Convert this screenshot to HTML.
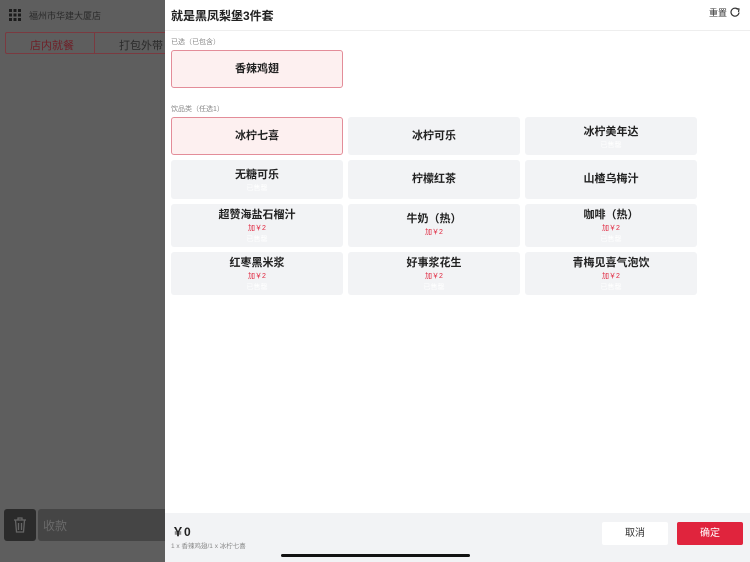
<!DOCTYPE html>
<html><head><meta charset="utf-8"><style>
*{margin:0;padding:0;box-sizing:border-box}
body{width:750px;height:562px;overflow:hidden;position:relative;font-family:"Liberation Sans","Noto Sans CJK SC",sans-serif;background:#fff}
.left{position:absolute;left:0;top:0;width:165px;height:562px;background:#5e5e5e}
.right{position:absolute;left:165px;top:0;width:585px;height:562px;background:#fff}
.abs{position:absolute}
.btn{position:absolute;width:172px;background:#f2f3f5;border-radius:3px;text-align:center;font-size:11px;color:#222;font-weight:600;line-height:15px}
.sel{background:#fdf0f0;border:1px solid #e38d99}
.red{color:#e0243d;font-size:7px;font-weight:normal;line-height:11px}
.w{color:#fff;font-size:7px;font-weight:normal;line-height:11px}
</style></head><body>
<div class="left">
 <svg class="abs" style="left:9px;top:9px" width="12" height="12"><g fill="#1c1c1c"><rect x="0" y="0" width="3" height="3"/><rect x="4.5" y="0" width="3" height="3"/><rect x="9" y="0" width="3" height="3"/><rect x="0" y="4.5" width="3" height="3"/><rect x="4.5" y="4.5" width="3" height="3"/><rect x="9" y="4.5" width="3" height="3"/><rect x="0" y="9" width="3" height="3"/><rect x="4.5" y="9" width="3" height="3"/><rect x="9" y="9" width="3" height="3"/></g></svg>
 <div class="abs" style="left:29px;top:9px;font-size:9px;color:#2a2a2a">福州市华建大厦店</div>
 <div class="abs" style="left:5px;top:32px;width:170px;height:22px;border:1px solid #7a3a40;border-radius:2px"></div>
 <div class="abs" style="left:94px;top:32px;width:1px;height:22px;background:#7a3a40"></div>
 <div class="abs" style="left:30px;top:37px;font-size:11px;color:#6e2028">店内就餐</div>
 <div class="abs" style="left:119px;top:37px;font-size:11px;color:#2a2a2a">打包外带</div>
 <div class="abs" style="left:4px;top:509px;width:32px;height:32px;background:#2b2b2b;border-radius:3px"></div>
 <svg class="abs" style="left:13px;top:517px" width="14" height="16"><g fill="none" stroke="#666" stroke-width="1.3"><path d="M1 3h12M5 3V1h4v2M2.5 3l1 12h7l1-12M5.5 6v7M8.5 6v7"/></g></svg>
 <div class="abs" style="left:38px;top:509px;width:130px;height:32px;background:#454545;border-radius:3px"></div>
 <div class="abs" style="left:43px;top:517px;font-size:12px;color:#6a6a6a">收款</div>
</div>
<div class="right">
 <div class="abs" style="left:6px;top:7px;font-size:12px;font-weight:bold;color:#222">就是黑凤梨堡3件套</div>
 <div class="abs" style="left:544px;top:6px;font-size:9px;color:#333">重置</div>
 <svg class="abs" style="left:565px;top:7px" width="10" height="10"><path d="M8 2.5A4 4 0 1 0 9 5.5" fill="none" stroke="#333" stroke-width="1.2"/><path d="M6 1.5l3 0.5-0.5 3" fill="none" stroke="#333" stroke-width="1.2"/></svg>
 <div class="abs" style="left:0;top:30px;width:585px;height:1px;background:#eee"></div>
 <div class="abs" style="left:6px;top:37px;font-size:7px;color:#888">已选（已包含）</div>
 <div class="abs" style="left:6px;top:104px;font-size:7px;color:#888">饮品类（任选1）</div>
</div>
<div class="btn sel" style="left:171px;top:50px;height:38px;line-height:36px">香辣鸡翅</div>
<div class="btn sel" style="left:171px;top:117px;height:38px;line-height:36px">冰柠七喜</div>
<div class="btn" style="left:348px;top:117px;height:38px;line-height:38px">冰柠可乐</div>
<div class="btn" style="left:525px;top:117px;height:38px;padding-top:8px">冰柠美年达<div class="w">已售罄</div></div>
<div class="btn" style="left:171px;top:160px;height:39px;padding-top:8px">无糖可乐<div class="w">已售罄</div></div>
<div class="btn" style="left:348px;top:160px;height:39px;line-height:39px">柠檬红茶</div>
<div class="btn" style="left:525px;top:160px;height:39px;line-height:39px">山楂乌梅汁</div>
<div class="btn" style="left:171px;top:204px;height:43px;padding-top:4px">超赞海盐石榴汁<div class="red">加￥2</div><div class="w">已售罄</div></div>
<div class="btn" style="left:348px;top:204px;height:43px;padding-top:8px">牛奶（热）<div class="red">加￥2</div></div>
<div class="btn" style="left:525px;top:204px;height:43px;padding-top:4px">咖啡（热）<div class="red">加￥2</div><div class="w">已售罄</div></div>
<div class="btn" style="left:171px;top:252px;height:43px;padding-top:4px">红枣黑米浆<div class="red">加￥2</div><div class="w">已售罄</div></div>
<div class="btn" style="left:348px;top:252px;height:43px;padding-top:4px">好事浆花生<div class="red">加￥2</div><div class="w">已售罄</div></div>
<div class="btn" style="left:525px;top:252px;height:43px;padding-top:4px">青梅见喜气泡饮<div class="red">加￥2</div><div class="w">已售罄</div></div>
<div class="abs" style="left:165px;top:513px;width:585px;height:49px;background:#f2f3f5"></div>
<div class="abs" style="left:172px;top:523px;font-size:12px;font-weight:bold;color:#222">￥0</div>
<div class="abs" style="left:171px;top:540px;font-size:6.5px;color:#888">1 x 香辣鸡翅/1 x 冰柠七喜</div>
<div class="abs" style="left:602px;top:522px;width:66px;height:23px;background:#fff;border-radius:2px;text-align:center;line-height:23px;font-size:10px;color:#333">取消</div>
<div class="abs" style="left:677px;top:522px;width:66px;height:23px;background:#e0243d;border-radius:2px;text-align:center;line-height:23px;font-size:10px;color:#fff">确定</div>
<div class="abs" style="left:281px;top:554px;width:189px;height:3px;background:#111;border-radius:2px"></div>
</body></html>
